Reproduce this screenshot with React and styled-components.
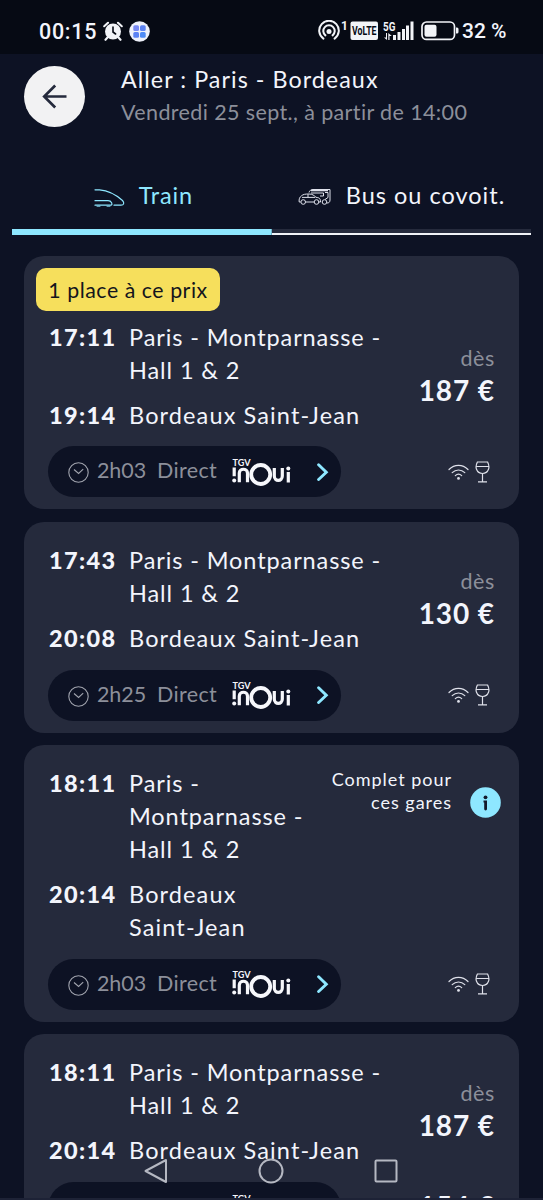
import React from 'react';
import styled, { createGlobalStyle } from 'styled-components';

const Global = createGlobalStyle`
  * { box-sizing: border-box; }
  html, body { margin: 0; background: #0d1224; overflow: hidden; }
  body { font-family: Lato, "Open Sans", sans-serif; color: #f3f5fc; }
  svg { display: block; flex: none; }
`;

const Screen = styled.main`
  position: relative;
  width: 543px;
  height: 1200px;
  overflow: hidden;
  background: #0d1224;
`;

const StatusBar = styled.div`
  display: flex;
  align-items: center;
  height: 54px;
  padding: 8px 35px 0 39px;
  background: #060a14;
  font-family: Roboto, sans-serif;
  font-weight: 500;
`;
const Clock = styled.span`
  width: 64px;
  font-size: 21.5px;
  letter-spacing: 0.7px;
  white-space: nowrap;
`;
const StatusIcons = styled.div`
  display: flex;
  align-items: center;
  margin-left: auto;
`;
const BatteryText = styled.span`
  width: 46px;
  margin-left: 3px;
  font-size: 21px;
  letter-spacing: 0;
  white-space: nowrap;
`;

const Header = styled.header`
  display: flex;
  height: 106px;
  padding: 12px 24px 0;
`;
const BackButton = styled.button`
  display: grid;
  place-items: center;
  width: 61px;
  height: 61px;
  padding: 0;
  border: 0;
  border-radius: 50%;
  background: #f2f2f3;
`;
const Heading = styled.div`
  display: flex;
  flex-direction: column;
  margin: -3px 0 0 36px;
  white-space: nowrap;
`;
const Title = styled.h1`
  margin: 0;
  font-size: 23.3px;
  line-height: 33px;
  font-weight: 400;
  letter-spacing: 1.05px;
`;
const Subtitle = styled.p`
  margin: 0;
  font-size: 21.5px;
  line-height: 32px;
  letter-spacing: 0.38px;
  color: #8c8f9a;
`;

const Tabs = styled.nav`
  display: flex;
  margin: 0 12px;
`;
const Tab = styled.button`
  display: flex;
  align-items: center;
  justify-content: center;
  width: 50%;
  height: 75px;
  padding: 2px 0 6px ${(p) => (p.$active ? 3 : 1)}px;
  gap: ${(p) => (p.$active ? 14 : 14.5)}px;
  border: 0;
  border-radius: 3px 3px 0 0;
  background: ${(p) => (p.$active
    ? 'linear-gradient(#8ee7ff, #8ee7ff) bottom / 100% 6px no-repeat'
    : 'linear-gradient(#f0f2f7, #f0f2f7) bottom / 100% 2px no-repeat, linear-gradient(#252a3c, #252a3c) bottom / 100% 6px no-repeat')};
  color: ${(p) => (p.$active ? '#8ee7ff' : '#f3f5fc')};
  font: 400 23.5px/33px Lato, sans-serif;
  letter-spacing: ${(p) => p.$spacing}px;
  white-space: nowrap;
`;

const List = styled.section`
  display: flex;
  flex-direction: column;
  gap: 12.4px;
  padding: 21.2px 24px 0;
`;
const Card = styled.article`
  flex: none;
  padding: ${(p) => (p.$badge ? 12 : 22)}px 24px 12px 25px;
  border-radius: 20px;
  background: #252a3c;
`;
const Badge = styled.div`
  display: inline-flex;
  align-items: center;
  justify-content: center;
  width: 184px;
  height: 43px;
  margin: 0 0 9.500px -13px;
  border-radius: 10px;
  background: #f6df5c;
  color: #14151c;
  font-size: 21.3px;
  letter-spacing: 0.55px;
  white-space: nowrap;
`;
const Body = styled.div`
  display: flex;
  justify-content: space-between;
`;
const Stops = styled.div`
  display: flex;
  flex-direction: column;
  gap: 12px;
  margin-bottom: ${(p) => (p.$badge ? 14.5 : 15)}px;
`;
const Stop = styled.div`
  display: grid;
  grid-template-columns: 80px auto;
  font-size: 23.5px;
  line-height: 33px;
  white-space: nowrap;
`;
const Time = styled.strong`
  font-weight: 900;
  letter-spacing: 1.4px;
`;
const Station = styled.span`
  letter-spacing: ${(p) => p.$spacing}px;
`;
const Fare = styled.div`
  display: flex;
  flex-direction: column;
  align-items: flex-end;
  padding-top: 21px;
  white-space: nowrap;
`;
const From = styled.span`
  font-size: 21.5px;
  line-height: 32px;
  letter-spacing: 0.6px;
  color: #8c8f9a;
`;
const Price = styled.strong`
  font-size: 28px;
  line-height: 32px;
  font-weight: 700;
  letter-spacing: 0.9px;
`;
const ExtraPrice = styled(Price)`
  align-self: flex-start;
  margin-top: 8px;
`;
const SoldOut = styled.div`
  display: flex;
  align-items: flex-end;
  gap: 18px;
  height: 51px;
  margin: 0 -6px 0 0;
  text-align: right;
  font-size: 18px;
  line-height: 23px;
  letter-spacing: 0.98px;
  white-space: nowrap;
`;
const SoldOutText = styled.span`
  align-self: flex-start;
  padding-top: 1px;
`;
const Foot = styled.div`
  display: flex;
  align-items: center;
  justify-content: space-between;
`;
const Journey = styled.button`
  display: flex;
  align-items: center;
  width: 293px;
  height: 51px;
  margin-left: -1px;
  padding: 0 12px 0 20px;
  border: 0;
  border-radius: 26px;
  background: #0d1224;
  color: #8c8f9a;
  font: 400 21.5px/30px Lato, sans-serif;
  white-space: nowrap;
`;
const Duration = styled.span`
  width: 60px;
  margin: -3px 0 0 8px;
  text-align: left;
  letter-spacing: -0.1px;
`;
const Direct = styled.span`
  width: 75px;
  margin-top: -3px;
  text-align: left;
  letter-spacing: 0.35px;
`;
const Chevron = styled.svg`
  margin-left: auto;
`;
const Services = styled.div`
  display: flex;
  align-items: center;
  gap: 6px;
  margin-right: 5px;
`;

const SystemNav = styled.nav`
  position: absolute;
  left: 0;
  right: 1px;
  bottom: 0;
  height: 59px;
  display: flex;
  align-items: center;
  justify-content: center;
  gap: 90px;
`;
const BottomEdge = styled.div`
  position: absolute;
  left: 0;
  right: 0;
  bottom: 0;
  height: 2px;
  background: #1d2236;
`;

const AlarmIcon = () => (
  <svg width="20" height="20" viewBox="0 0 20 20">
    <circle cx="10" cy="10.5" r="8" fill="#f2f4f8" />
    <path d="M1.2 5.2 5 1.8M18.8 5.2 15 1.8M4.5 16.5l-2 2.3M15.5 16.5l2 2.3" stroke="#f2f4f8" strokeWidth="2.1" strokeLinecap="round" />
    <path d="M10 6v5l2.6 2" fill="none" stroke="#060a14" strokeWidth="1.6" strokeLinecap="round" />
  </svg>
);
const AppSvg = styled.svg`
  margin-left: 6px;
`;
const AppIcon = () => (
  <AppSvg width="21" height="21" viewBox="0 0 21 21">
    <circle cx="10.5" cy="10.5" r="10.3" fill="#eef1fa" />
    <rect x="4.3" y="4.3" width="5.7" height="5.7" rx="1.5" fill="#7788f2" />
    <rect x="11" y="4.3" width="5.7" height="5.7" rx="1.5" fill="#5c83f3" />
    <rect x="4.3" y="11" width="5.7" height="5.7" rx="1.5" fill="#5c83f3" />
    <rect x="11" y="11" width="5.7" height="5.7" rx="1.5" fill="#4e8bf5" />
  </AppSvg>
);
const RadioIcons = () => (
  <svg width="141" height="22" viewBox="0 0 141 22" fill="none" stroke="#f2f4f8">
    <path d="M5.4 18.6a9.8 9.8 0 1 1 11.2 0M7.4 15.4a5.7 5.7 0 1 1 7.2 0" strokeWidth="2" strokeLinecap="round" />
    <circle cx="11" cy="11.5" r="2.5" fill="#f2f4f8" stroke="none" />
    <g fill="#f2f4f8" stroke="none" fontFamily="Roboto" fontWeight="700">
      <text x="23" y="9.5" fontSize="12">1</text>
      <rect x="32.5" y="1.5" width="27.5" height="18.5" rx="2" />
      <g transform="translate(34 15.3) scale(.7 1)"><text fontSize="12.5" fill="#060a14">VoLTE</text></g>
      <g transform="translate(65 10.5) scale(.82 1)"><text fontSize="12">5G</text></g>
      <rect x="75" y="15" width="3" height="5" />
      <rect x="79.5" y="12" width="3" height="8" />
      <rect x="84" y="9" width="3" height="11" />
      <rect x="88" y="5.5" width="3" height="14.5" />
      <rect x="92.5" y="1.5" width="3" height="18.5" />
      <path d="M69 13v7l-3-2.5h2v-4.5zM70.3 20v-7l3.5 3h-2.3v4z" />
      <rect x="106.5" y="4.7" width="12" height="12" rx="2" />
      <path d="M138 7.5h1a1.500 1.500 0 0 1 1.500 1.500v3a1.500 1.500 0 0 1-1.500 1.500h-1z" />
    </g>
    <rect x="104" y="2" width="32.5" height="17.4" rx="4.5" strokeWidth="1.7" />
  </svg>
);
const BackArrow = () => (
  <svg width="26" height="28" viewBox="0 0 26 28" fill="none" stroke="#252a3c" strokeWidth="2.7">
    <path d="M24.5 13.5H3M13.2 2.5 2.2 13.5l11 11" />
  </svg>
);
const TrainSvg = styled.svg`
  margin-top: 4px;
`;
const TrainIcon = () => (
  <TrainSvg width="31" height="20" viewBox="0 0 31 20" fill="none" stroke="#8ee7ff" strokeWidth="1.2" strokeLinecap="round">
    <path d="M1 1.8h4.5C16 2.6 23 7.5 28.5 12.5c2.3 2.7 1.2 4.7-1.5 4.7h-7M1 12.7h13c2 0 3 .8 3.6 2 1 2.3 0 2.5-2 2.5H1" />
    <path d="M3 18.3h3M13 18.3h3" strokeWidth=".8" />
  </TrainSvg>
);
const BusSvg = styled.svg`
  margin-top: 3px;
`;
const BusIcon = () => (
  <BusSvg width="33" height="18" viewBox="0 0 33 18" fill="none" stroke="#dfe2ec" strokeWidth="1" strokeLinejoin="round">
    <path d="M11 4.500c.6-2 2-3 4-3h17v10.500c0 2-1 3-3 3M13 5h12.500v3H22M27 4.500h3v5l-3 2" />
    <path d="M13 2.500h17" strokeWidth="1.600" />
    <path d="M2.600 14H1.200c-.4-3 .4-4.800 2.300-6.200C5.300 6.300 7 6 11 6c3.500 0 5 1.400 7 3.300 3.500.5 4.500 1 4.500 4.700h-1.700M7.500 14h8.500M4 9.400h13M10 6.200v3" />
    <circle cx="5.200" cy="14" r="2.300" /><circle cx="18.500" cy="14" r="2.300" /><circle cx="26.500" cy="14" r="2.300" />
  </BusSvg>
);
const ClockSvg = styled.svg`
  margin-top: 2px;
`;
const ClockIcon = () => (
  <ClockSvg width="21" height="21" viewBox="0 0 21 21" fill="none" stroke="#a1a4ae" strokeWidth="1.1">
    <circle cx="10.5" cy="10.5" r="9.7" />
    <path d="m6 7.5 4.6 4 4.6-4.3" />
  </ClockSvg>
);
const InouiLogo = () => (
  <svg width="60" height="30" viewBox="0 0 60 30" fill="none" stroke="#f6f7fb" strokeWidth="3.2">
    <text x="0.5" y="8.8" fontFamily="Lato" fontWeight="700" fontSize="9.5" textLength="18" lengthAdjust="spacingAndGlyphs" fill="#f6f7fb" stroke="none">TGV</text>
    <path d="M2.200 10.500v8.800M7.300 25.300V16c0-5 8.200-5 8.200 0v9.300" />
    <circle cx="2.200" cy="23.500" r="2" fill="#f6f7fb" stroke="none" />
    <circle cx="28.700" cy="17.500" r="9.500" strokeWidth="3.800" />
    <path d="M42.300 11v8c0 5.800 8 5.800 8 0V11M56.300 15v10.500" />
    <circle cx="56.300" cy="11.600" r="2" fill="#f6f7fb" stroke="none" />
  </svg>
);
const ChevronIcon = () => (
  <Chevron width="12" height="18" viewBox="0 0 12 18" fill="none" stroke="#8ee7ff" strokeWidth="2.9" strokeLinecap="round">
    <path d="m1.600 1.800 7.700 7.500-7.700 7.200" />
  </Chevron>
);
const WifiIcon = () => (
  <svg width="21" height="16" viewBox="0 0 21 16" fill="none" stroke="#dfe1ea" strokeWidth="1.2" strokeLinecap="round">
    <path d="M1 5.500c5.400-5.400 13.600-5.400 19 0M4.200 8.700c3.600-3.600 9-3.600 12.600 0M7.300 11.600c1.900-1.800 4.500-1.800 6.400 0" />
    <circle cx="10.500" cy="14.400" r="1.400" fill="#dfe1ea" stroke="none" />
  </svg>
);
const GlassIcon = () => (
  <svg width="15" height="22" viewBox="0 0 15 22" fill="none" stroke="#dfe1ea" strokeWidth="1.2">
    <path d="M2.400 1h10.200c1.500 3 1.600 5.500.9 7.300-1 2.700-3.200 4.200-6 4.200s-5-1.500-6-4.200C.8 6.500.900 4 2.400 1ZM1.200 5.500h12.600M7.500 12.500v8.200M3 20.900h9" />
  </svg>
);
const InfoIcon = () => (
  <svg width="31" height="31" viewBox="0 0 31 31" fill="#14192b">
    <circle cx="15.5" cy="15.5" r="15.3" fill="#8ee7ff" />
    <circle cx="15.5" cy="10.3" r="1.9" />
    <path d="M13.500 13.500h3.500v8.500a1.400 1.400 0 0 1-2.800 0v-6.500h-.7z" />
  </svg>
);

const trips = [
  { dep: '17:11', arr: '19:14', time: '2h03', price: '187 €', badge: '1 place à ce prix' },
  { dep: '17:43', arr: '20:08', time: '2h25', price: '130 €' },
  { dep: '18:11', arr: '20:14', time: '2h03', full: true },
  { dep: '18:11', arr: '20:14', time: '2h03', price: '187 €', secondPrice: '154 €' },
];

const Trip = ({ trip }) => (
  <Card $badge={!!trip.badge}>
    {trip.badge && <Badge>{trip.badge}</Badge>}
    <Body>
      <Stops $badge={!!trip.badge}>
        <Stop>
          <Time>{trip.dep}</Time>
          <Station $spacing={0.9}>
            {trip.full ? <>Paris -<br />Montparnasse -<br />Hall 1 &amp; 2</> : <>Paris - Montparnasse -<br />Hall 1 &amp; 2</>}
          </Station>
        </Stop>
        <Stop>
          <Time>{trip.arr}</Time>
          <Station $spacing={1.12}>{trip.full ? <>Bordeaux<br />Saint-Jean</> : 'Bordeaux Saint-Jean'}</Station>
        </Stop>
      </Stops>
      {trip.full
        ? <SoldOut><SoldOutText>Complet pour<br />ces gares</SoldOutText><InfoIcon /></SoldOut>
        : <Fare><From>dès</From><Price>{trip.price}</Price></Fare>}
    </Body>
    <Foot>
      <Journey>
        <ClockIcon />
        <Duration>{trip.time}</Duration>
        <Direct>Direct</Direct>
        <InouiLogo />
        <ChevronIcon />
      </Journey>
      {trip.secondPrice
        ? <ExtraPrice>{trip.secondPrice}</ExtraPrice>
        : <Services><WifiIcon /><GlassIcon /></Services>}
    </Foot>
  </Card>
);

export default function App() {
  return (
    <Screen>
      <Global />
      <StatusBar>
        <Clock>00:15</Clock>
        <AlarmIcon />
        <AppIcon />
        <StatusIcons><RadioIcons /><BatteryText>32 %</BatteryText></StatusIcons>
      </StatusBar>
      <Header>
        <BackButton aria-label="Retour"><BackArrow /></BackButton>
        <Heading>
          <Title>Aller : Paris - Bordeaux</Title>
          <Subtitle>Vendredi 25 sept., à partir de 14:00</Subtitle>
        </Heading>
      </Header>
      <Tabs>
        <Tab $active $spacing={0.8}><TrainIcon />Train</Tab>
        <Tab $spacing={1}><BusIcon />Bus ou covoit.</Tab>
      </Tabs>
      <List>{trips.map((trip, i) => <Trip key={i} trip={trip} />)}</List>
      <BottomEdge />
      <SystemNav>
        <svg width="24" height="26" viewBox="0 0 24 26" fill="none" stroke="#b5b8c2" strokeWidth="2" strokeLinejoin="round"><path d="M22 2v22L1.500 13z" /></svg>
        <svg width="26" height="26" viewBox="0 0 26 26" fill="none" stroke="#b5b8c2" strokeWidth="2"><circle cx="13" cy="13" r="11.5" /></svg>
        <svg width="24" height="26" viewBox="0 0 24 26" fill="none" stroke="#b5b8c2" strokeWidth="2"><rect x="1.5" y="2.5" width="21" height="21" rx="1" /></svg>
      </SystemNav>
    </Screen>
  );
}
